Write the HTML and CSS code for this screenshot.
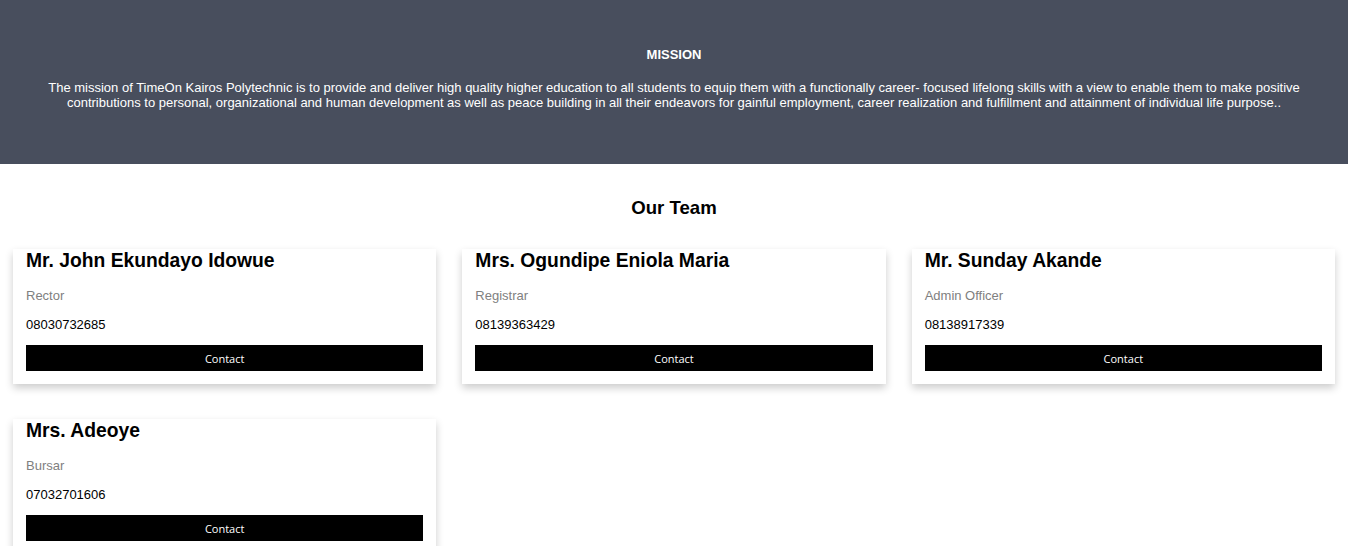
FILE: index.html
```html
<!DOCTYPE html>
<html lang="en">
<head>
<meta charset="utf-8">
<title>About</title>
<link rel="stylesheet" href="styles.css">
</head>
<body>
<section class="about">
  <h4 class="about-title">MISSION</h4>
  <p class="about-text">The mission of TimeOn Kairos Polytechnic is to provide and deliver high quality higher education to all students to equip them with a functionally career- focused lifelong skills with a view to enable them to make positive contributions to personal, organizational and human development as well as peace building in all their endeavors for gainful employment, career realization and fulfillment and attainment of individual life purpose..</p>
</section>

<h2 class="team-title">Our Team</h2>

<div class="team-grid">
  <div class="card">
    <h2 class="name">Mr. John Ekundayo Idowue</h2>
    <p class="role">Rector</p>
    <p class="phone">08030732685</p>
    <button class="btn">Contact</button>
  </div>
  <div class="card">
    <h2 class="name">Mrs. Ogundipe Eniola Maria</h2>
    <p class="role">Registrar</p>
    <p class="phone">08139363429</p>
    <button class="btn">Contact</button>
  </div>
  <div class="card">
    <h2 class="name">Mr. Sunday Akande</h2>
    <p class="role">Admin Officer</p>
    <p class="phone">08138917339</p>
    <button class="btn">Contact</button>
  </div>
  <div class="card">
    <h2 class="name">Mrs. Adeoye</h2>
    <p class="role">Bursar</p>
    <p class="phone">07032701606</p>
    <button class="btn">Contact</button>
  </div>
</div>
</body>
</html>
```
FILE: styles.css
```css
* { box-sizing: border-box; }

body {
  margin: 0;
  font-family: "Liberation Sans", Arial, Helvetica, sans-serif;
  color: #000;
  background: #fff;
}

.about {
  background-color: #484e5d;
  color: #fff;
  text-align: center;
  padding: 47px 40px 54px;
}

.about-title {
  font-size: 13px;
  line-height: 15px;
  font-weight: bold;
  margin: 0 0 18px;
}

.about-text {
  font-size: 13px;
  line-height: 15px;
  margin: 0;
}

.team-title {
  font-size: 18.6px;
  line-height: 21px;
  text-align: center;
  margin: 33px 0 0;
}

.team-grid {
  display: grid;
  grid-template-columns: repeat(3, 1fr);
  column-gap: 26px;
  row-gap: 35px;
  padding: 31px 13px 0;
}

.card {
  background: #fff;
  box-shadow: 0 4px 8px 0 rgba(0, 0, 0, 0.2);
  padding: 0 13px 13px;
}

.name {
  font-size: 19.3px;
  line-height: 24px;
  margin: 0;
}

.role {
  color: grey;
  font-size: 13px;
  line-height: 15px;
  margin: 15px 0 0;
}

.phone {
  font-size: 13px;
  line-height: 15px;
  margin: 14px 0 0;
}

.btn {
  display: block;
  width: 100%;
  height: 26px;
  margin-top: 13px;
  border: none;
  outline: 0;
  padding: 0;
  background-color: #000;
  color: #fff;
  font-family: "Open Sans", "Noto Sans", sans-serif;
  font-size: 11px;
  text-align: center;
  cursor: pointer;
}
```
